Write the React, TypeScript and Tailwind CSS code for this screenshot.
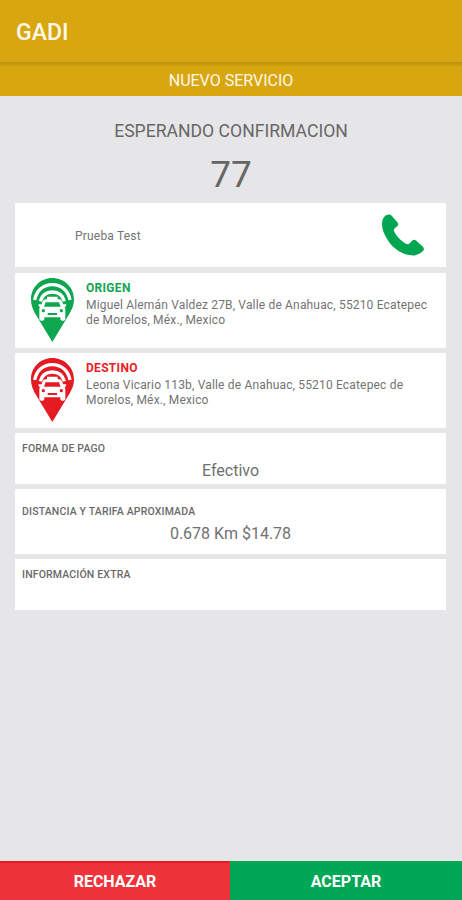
function PhoneIcon() {
  return (
    <svg viewBox="0 0 127 125" className="w-[42px] h-[42px]" fill="#00a651">
      <path d="M7 7 C13 0 23 -2 28 3 L47 25 C50 29 50 32 46 36 L38 43 C35 46 36 50 38 54 C46 68 58 81 72 89 C76 91 80 91 83 88 L91 80 C95 76 99 76 103 79 L123 97 C128 102 128 108 123 112 C114 121 101 126 87 124 C62 121 36 106 18 79 C6 61 0 45 0 30 C0 20 2 12 7 7 Z" />
    </svg>
  );
}

function TaxiPin({ color }: { color: string }) {
  return (
    <svg viewBox="0 0 129 192" className="w-[43px] h-[64px]">
      <path
        fill={color}
        d="M64 0 C28 0 0 28 0 64 C0 79 4 91 11 104 L64 192 L117 104 C125 91 129 79 129 64 C129 28 100 0 64 0 Z"
      />
      <g fill="none" stroke="#fff" strokeWidth="10">
        <path d="M11 66 C17 36 38 20 64 20 C90 20 111 36 117 66" />
        <path d="M28 70 C33 51 46 42 64 42 C82 42 95 51 100 70" />
      </g>
      {/* car */}
      <path
        fill="#fff"
        d="M48 56 H80 V64 H85 C89 64 91 66 93 70 L99 85 C102 88 103 91 103 96 V122 C103 130 88 130 88 122 V118 H40 V122 C40 130 25 130 25 122 V96 C25 91 26 88 29 85 L35 70 C37 66 39 64 43 64 H48 Z"
      />
      <path fill="#fff" d="M22 79 H32 V86 H24 Z M106 79 H96 V86 H104 Z" />
      <path fill={color} d="M44 73 H84 L89 86 H39 Z" />
      <circle cx="37" cy="98" r="5" fill={color} />
      <circle cx="91" cy="98" r="5" fill={color} />
      <path fill={color} d="M50 105 H78 V111 H50 Z" />
    </svg>
  );
}

function AddressCard({
  title,
  lines,
  color,
  titleClass,
}: {
  title: string;
  lines: string[];
  color: string;
  titleClass: string;
}) {
  return (
    <div className="flex h-[75px] bg-white pl-4 pt-[5px]">
      <TaxiPin color={color} />
      <div className="ml-3 pt-[3px] whitespace-nowrap text-[12px] leading-[15px] text-[#737373]">
        <div className={titleClass}>{title}</div>
        <div className="pt-[2px] tracking-[0.17px]">
          {lines.map((line) => (
            <div key={line}>{line}</div>
          ))}
        </div>
      </div>
    </div>
  );
}

function Label({ children }: { children: string }) {
  return (
    <div className="pl-[7px] text-[10.5px] leading-[14px] font-medium tracking-[0.16px] text-[#6a6a6a]">
      {children}
    </div>
  );
}

export default function App() {
  return (
    <div className="flex h-[900px] w-[462px] flex-col bg-[#e6e6e8] font-['Roboto',sans-serif]">
      <header className="flex h-[62px] items-center bg-[#d8a60f] pl-4 pt-[5px] text-[23px] font-medium text-[#fff8ea]">
        GADI
      </header>
      <div className="h-[34px] bg-[#d8a60f]">
        <div className="h-1 bg-linear-to-b from-[#b98d0d] to-[#d2a10f]" />
        <div className="pt-[3px] text-center text-[16px] leading-[24px] text-[#fff8ea]">
          NUEVO SERVICIO
        </div>
      </div>

      <div className="h-[107px] pt-[23px] text-center text-[#666667]">
        <div className="text-[17.6px] leading-6">ESPERANDO CONFIRMACION</div>
        <div className="pt-[12px] text-[37px] leading-[40px]">77</div>
      </div>

      <main className="flex flex-1 flex-col gap-[5px] pl-[15px] pr-4">
        <div className="mb-px flex h-[64px] items-center justify-between bg-white pl-[60px] pr-[22px]">
          <span className="pt-px text-[12px] tracking-[0.2px] text-[#737373]">Prueba Test</span>
          <PhoneIcon />
        </div>
        <AddressCard
          title="ORIGEN"
          color="#0fa650"
          titleClass="font-bold tracking-[0.3px] text-[#0fa650]"
          lines={[
            "Miguel Alemán Valdez 27B, Valle de Anahuac, 55210 Ecatepec",
            "de Morelos, Méx., Mexico",
          ]}
        />
        <AddressCard
          title="DESTINO"
          color="#e41b23"
          titleClass="font-bold tracking-[0.3px] text-[#ed1c24]"
          lines={[
            "Leona Vicario 113b, Valle de Anahuac, 55210 Ecatepec de",
            "Morelos, Méx., Mexico",
          ]}
        />
        <div className="h-[51px] bg-white pt-[9px]">
          <Label>FORMA DE PAGO</Label>
          <div className="pt-1 text-center text-[16px] leading-[22px] text-[#707070]">Efectivo</div>
        </div>
        <div className="h-[65px] bg-white pt-[16px]">
          <Label>DISTANCIA Y TARIFA APROXIMADA</Label>
          <div className="pt-1 text-center text-[16px] leading-[22px] text-[#707070]">
            0.678 Km $14.78
          </div>
        </div>
        <div className="h-[51px] bg-white pt-[9px]">
          <Label>INFORMACIÓN EXTRA</Label>
        </div>
      </main>

      <footer className="flex h-[39px] text-[16px] font-bold text-white">
        <button className="w-[230px] border-t-2 border-[#e51c23] bg-[#ee333a]">RECHAZAR</button>
        <button className="flex-1 bg-[#00a757] pt-[2px]">ACEPTAR</button>
      </footer>
    </div>
  );
}
